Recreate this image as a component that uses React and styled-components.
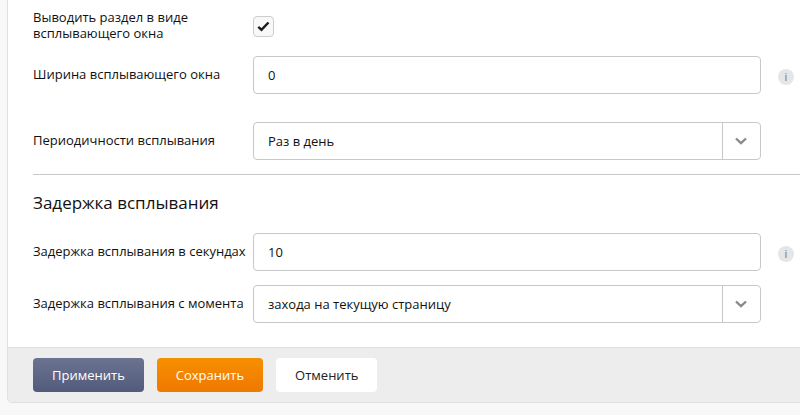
import React, { useState } from "react";
import styled, { createGlobalStyle } from "styled-components";

const GlobalStyle = createGlobalStyle`
  * {
    box-sizing: border-box;
  }
  body {
    margin: 0;
    background: #f8f8f8;
    color: #111;
    font-family: "Open Sans", "Noto Sans", sans-serif;
    font-size: 13px;
    line-height: 16px;
  }
  button, input, select {
    font: inherit;
    color: inherit;
  }
`;

const Page = styled.main`
  padding: 0 0 12px 7px;
`;

const Panel = styled.form`
  background: #fff;
  border: solid #e0e0e0;
  border-width: 0 0 1px 1px;
  border-bottom-left-radius: 5px;
  overflow: hidden;
`;

const Section = styled.section`
  display: flex;
  flex-direction: column;
  gap: 14px;
  margin-left: 25px;
  padding: 10px 0 14px;

  & + & {
    padding: 16px 0 24px;
    border-top: 1px solid #c8c8c8;
  }
`;

const Title = styled.h2`
  margin: 0 0 4px;
  font-size: 17px;
  line-height: 24px;
  font-weight: 400;
`;

const Row = styled.div`
  display: grid;
  grid-template-columns: 220px minmax(0, 1fr) 16px;
  align-items: center;
  margin-top: ${({ $spaced }) => ($spaced ? "14px" : "0")};
  padding-right: 6px;
`;

const Label = styled.label`
  margin-top: -1px;
  padding-bottom: 1px;
`;

const Control = styled.div`
  position: relative;
  display: flex;
  margin-right: 17px;
`;

const TextInput = styled.input`
  width: 100%;
  height: 38px;
  padding: 0 14px;
  border: 1px solid #c8c8c8;
  border-radius: 4px;
  background: #fff;
`;

const SelectInput = styled.select`
  width: 100%;
  height: 38px;
  padding: 0 52px 0 14px;
  border: 1px solid #c8c8c8;
  border-radius: 4px;
  background: #fff;
  appearance: none;
`;

const Arrow = styled.span`
  position: absolute;
  top: 0;
  right: 0;
  bottom: 0;
  display: flex;
  align-items: center;
  justify-content: center;
  width: 39px;
  padding-right: 2px;
  border-left: 1px solid #c8c8c8;
  pointer-events: none;
`;

const Tick = styled.svg`
  position: absolute;
  top: 0;
  left: 0;
  pointer-events: none;
`;

const CheckInput = styled.input`
  width: 21px;
  height: 21px;
  margin: 0;
  border: 1px solid #cdcdcd;
  border-radius: 4px;
  background: #f8f8f8;
  appearance: none;

  &:not(:checked) + ${Tick} {
    display: none;
  }
`;

const InfoButton = styled.button`
  display: flex;
  align-items: center;
  justify-content: center;
  width: 16px;
  height: 16px;
  margin-top: 3px;
  padding: 0;
  border: 0;
  border-radius: 50%;
  background: #e6e6e6;
  color: #8c8c8c;
  font-size: 10px;
  font-weight: 600;
`;

const Footer = styled.footer`
  display: flex;
  gap: 13px;
  padding: 10px 25px;
  border-top: 1px solid #e0e0e0;
  background: #ededed;
`;

const Button = styled.button`
  height: 34px;
  padding: 0 19px;
  border: 0;
  border-radius: 4px;
  background: ${({ $background }) => $background || "#fff"};
  color: ${({ $color }) => $color || "#222"};
`;

const CheckField = ({ id, label }) => {
  const [checked, setChecked] = useState(true);

  return (
    <Row>
      <Label htmlFor={id}>{label}</Label>
      <Control>
        <CheckInput
          id={id}
          type="checkbox"
          checked={checked}
          onChange={(e) => setChecked(e.target.checked)}
        />
        <Tick width="21" height="21" viewBox="0 0 21 21" fill="none">
          <path d="M5.3 10.8l3.2 3 7-7.3" stroke="#1c1c1c" strokeWidth="2.5" />
        </Tick>
      </Control>
    </Row>
  );
};

const TextField = ({ id, label, value }) => (
  <Row>
    <Label htmlFor={id}>{label}</Label>
    <Control>
      <TextInput id={id} type="text" defaultValue={value} />
    </Control>
    <InfoButton type="button" aria-label="Подсказка">
      i
    </InfoButton>
  </Row>
);

const SelectField = ({ id, label, options, spaced }) => (
  <Row $spaced={spaced}>
    <Label htmlFor={id}>{label}</Label>
    <Control>
      <SelectInput id={id}>
        {options.map((option) => (
          <option key={option}>{option}</option>
        ))}
      </SelectInput>
      <Arrow>
        <svg width="12" height="8" viewBox="0 0 12 8" fill="none">
          <path d="M1 1.5l5 4.7 5-4.7" stroke="#8a8a8a" strokeWidth="2.4" />
        </svg>
      </Arrow>
    </Control>
  </Row>
);

const App = () => {
  return (
    <>
      <GlobalStyle />
      <Page>
        <Panel onSubmit={(e) => e.preventDefault()}>
          <Section>
            <CheckField
              id="popup"
              label="Выводить раздел в виде всплывающего окна"
            />
            <TextField id="width" label="Ширина всплывающего окна" value="0" />
            <SelectField
              id="period"
              label="Периодичности всплывания"
              options={["Раз в день"]}
              spaced
            />
          </Section>
          <Section>
            <Title>Задержка всплывания</Title>
            <TextField
              id="delay"
              label="Задержка всплывания в секундах"
              value="10"
            />
            <SelectField
              id="moment"
              label="Задержка всплывания с момента"
              options={["захода на текущую страницу"]}
            />
          </Section>
          <Footer>
            <Button
              type="button"
              $background="linear-gradient(#6b7391, #525b7a)"
              $color="#fff"
            >
              Применить
            </Button>
            <Button
              type="submit"
              $background="linear-gradient(#f59000, #f07800)"
              $color="#fff"
            >
              Сохранить
            </Button>
            <Button type="reset">Отменить</Button>
          </Footer>
        </Panel>
      </Page>
    </>
  );
};

export default App;
